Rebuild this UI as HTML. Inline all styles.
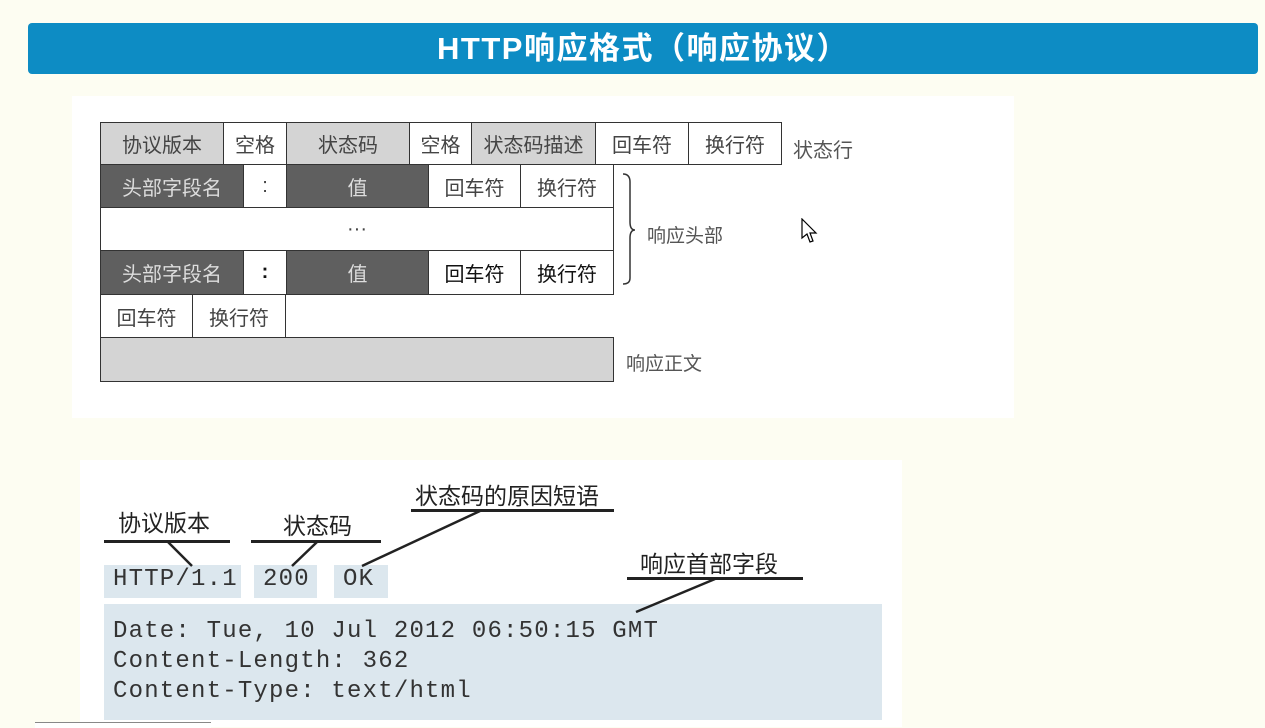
<!DOCTYPE html>
<html><head><meta charset="utf-8"><style>
body{margin:0;width:1265px;height:727px;background:#fdfdf2;position:relative;overflow:hidden;font-family:"Liberation Sans","Noto Sans CJK SC",sans-serif}
.a{position:absolute}
.t{left:28px;top:23px;width:1230px;height:51px;background:#0d8cc4;border-radius:4px;color:#fff;font-weight:bold;font-size:31px;letter-spacing:1.5px;text-align:center;line-height:51px}
.c{position:absolute;box-sizing:border-box;border:1.5px solid #333;display:flex;align-items:center;justify-content:center;font-size:20px;color:#444}
.g{background:#d4d4d4}.d{background:#5f5f5f;color:#ddd}.w{background:#fff}
.l{font-size:19px;color:#555}
.m{font-family:"Liberation Mono",monospace;font-size:24px;letter-spacing:1.2px;color:#333}
.h{height:2.5px;background:#222}
.lb{font-size:23px;color:#222}
</style></head><body>
<div class="a t">HTTP响应格式（响应协议）</div>
<div class="a" style="left:72px;top:96px;width:942px;height:322px;background:#fff"></div>
<div class="c g" style="left:100px;top:122px;width:124px;height:43px">协议版本</div>
<div class="c w" style="left:223px;top:122px;width:64px;height:43px">空格</div>
<div class="c g" style="left:286px;top:122px;width:124px;height:43px">状态码</div>
<div class="c w" style="left:409px;top:122px;width:63px;height:43px">空格</div>
<div class="c g" style="left:471px;top:122px;width:125px;height:43px">状态码描述</div>
<div class="c w" style="left:595px;top:122px;width:94px;height:43px">回车符</div>
<div class="c w" style="left:688px;top:122px;width:94px;height:43px">换行符</div>
<div class="a l" style="left:793px;top:134px;font-size:20px">状态行</div>
<div class="c d" style="left:100px;top:164px;width:144px;height:44px">头部字段名</div>
<div class="c w" style="left:243px;top:164px;width:44px;height:44px">:</div>
<div class="c d" style="left:286px;top:164px;width:143px;height:44px">值</div>
<div class="c w" style="left:428px;top:164px;width:93px;height:44px">回车符</div>
<div class="c w" style="left:520px;top:164px;width:94px;height:44px">换行符</div>
<div class="c w" style="left:100px;top:207px;width:514px;height:44px">···</div>
<div class="c d" style="left:100px;top:250px;width:144px;height:45px">头部字段名</div>
<div class="c w" style="left:243px;top:250px;width:44px;height:45px;color:#111;font-weight:bold">:</div>
<div class="c d" style="left:286px;top:250px;width:143px;height:45px">值</div>
<div class="c w" style="left:428px;top:250px;width:93px;height:45px;color:#111">回车符</div>
<div class="c w" style="left:520px;top:250px;width:94px;height:45px;color:#111">换行符</div>
<div class="c w" style="left:100px;top:294px;width:93px;height:44px">回车符</div>
<div class="c w" style="left:192px;top:294px;width:94px;height:44px">换行符</div>
<div class="c g" style="left:100px;top:337px;width:514px;height:45px"></div>
<svg class="a" style="left:618px;top:172px" width="20" height="115"><path d="M5 2 Q12 2 12 10 V50 Q12 58 17 58 Q12 58 12 66 V106 Q12 112 5 112" fill="none" stroke="#333" stroke-width="1.5"/></svg>
<div class="a l" style="left:647px;top:221px">响应头部</div>
<div class="a l" style="left:626px;top:349px">响应正文</div>
<svg class="a" style="left:801px;top:218px" width="20" height="26"><path d="M1 1 V20 L6 16 L9 24 L12 23 L9 15 L15 15 Z" fill="#fff" stroke="#000" stroke-width="1.2"/></svg>
<div class="a" style="left:80px;top:460px;width:822px;height:267px;background:#fff"></div>
<div class="a" style="left:104px;top:565px;width:137px;height:33px;background:#dce7ee"></div>
<div class="a" style="left:254px;top:565px;width:63px;height:33px;background:#dce7ee"></div>
<div class="a" style="left:334px;top:565px;width:54px;height:33px;background:#dce7ee"></div>
<div class="a" style="left:104px;top:604px;width:778px;height:116px;background:#dce7ee"></div>
<div class="a m" style="left:113px;top:566px">HTTP/1.1</div>
<div class="a m" style="left:263px;top:566px">200</div>
<div class="a m" style="left:343px;top:566px">OK</div>
<div class="a m" style="left:113px;top:617px;line-height:30px">Date: Tue, 10 Jul 2012 06:50:15 GMT<br>Content-Length: 362<br>Content-Type: text/html</div>
<div class="a lb" style="left:118px;top:504px">协议版本</div>
<div class="a lb" style="left:283px;top:507px">状态码</div>
<div class="a lb" style="left:415px;top:477px">状态码的原因短语</div>
<div class="a lb" style="left:640px;top:545px">响应首部字段</div>
<div class="a h" style="left:104px;top:540px;width:126px"></div>
<div class="a h" style="left:251px;top:540px;width:130px"></div>
<div class="a h" style="left:411px;top:509px;width:203px"></div>
<div class="a h" style="left:627px;top:577px;width:176px"></div>
<svg class="a" style="left:0;top:0" width="1265" height="727"><g stroke="#222" stroke-width="2.5"><line x1="168" y1="542" x2="192" y2="566"/><line x1="317" y1="542" x2="292" y2="566"/><line x1="480" y1="511" x2="362" y2="566"/><line x1="715" y1="579" x2="636" y2="612"/></g></svg>
<div class="a" style="left:35px;top:722px;width:176px;height:5px;border-top:1px solid #888;background:#fff"></div>
</body></html>
